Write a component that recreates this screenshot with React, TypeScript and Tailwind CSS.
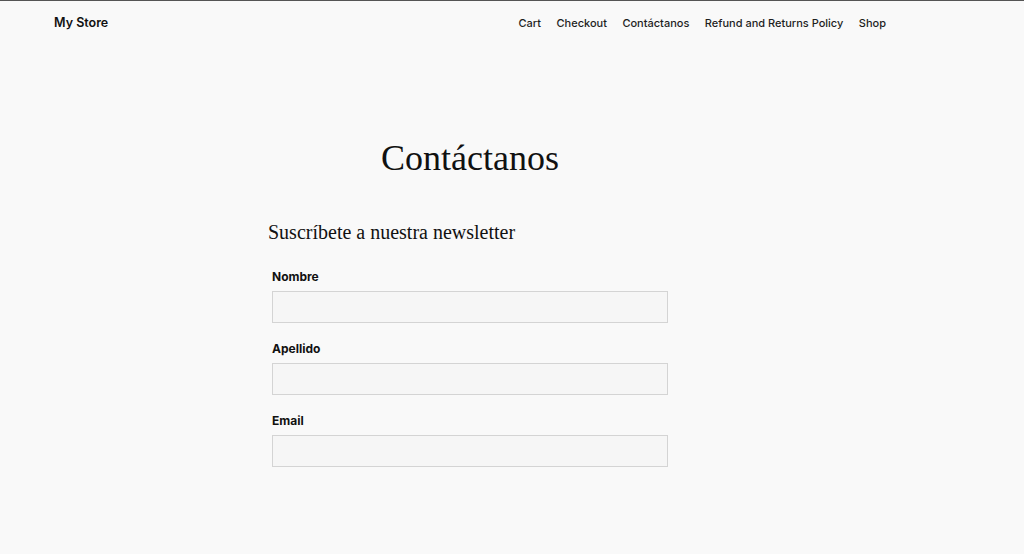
export default function App() {
  const nav = ['Cart', 'Checkout', 'Contáctanos', 'Refund and Returns Policy', 'Shop'];
  const fields = ['Nombre', 'Apellido', 'Email'];

  return (
    <div className="min-h-[554px] bg-[#f9f9f9] border-t border-[#555] font-['Inter',sans-serif] text-[#111]">
      <header className="flex items-center justify-between h-[45px] pl-[54px] pr-[138px]">
        <div className="text-[12.5px] font-semibold">My Store</div>
        <nav className="flex gap-[15.5px] text-[11px] font-medium">
          {nav.map((n) => (
            <a key={n} href="#" className="text-[#1e1e1e]">{n}</a>
          ))}
        </nav>
      </header>

      <main className="pl-[268px] pt-[94px]">
        <div className="w-[404px]">
          <h1 className="text-center font-['Liberation_Serif',serif] text-[36px] leading-none">Contáctanos</h1>
          <h2 className="mt-[46px] font-['Liberation_Serif',serif] text-[20px] leading-none">Suscríbete a nuestra newsletter</h2>
          <form className="mt-[29px] pl-[4px] flex flex-col gap-[20px]">
            {fields.map((f) => (
              <label key={f} className="flex flex-col gap-[8px]">
                <span className="text-[12px] font-bold leading-none">{f}</span>
                <input className="w-[396px] h-[32px] border border-[#d4d4d4] bg-[#f6f6f6]" />
              </label>
            ))}
          </form>
        </div>
      </main>
    </div>
  );
}
